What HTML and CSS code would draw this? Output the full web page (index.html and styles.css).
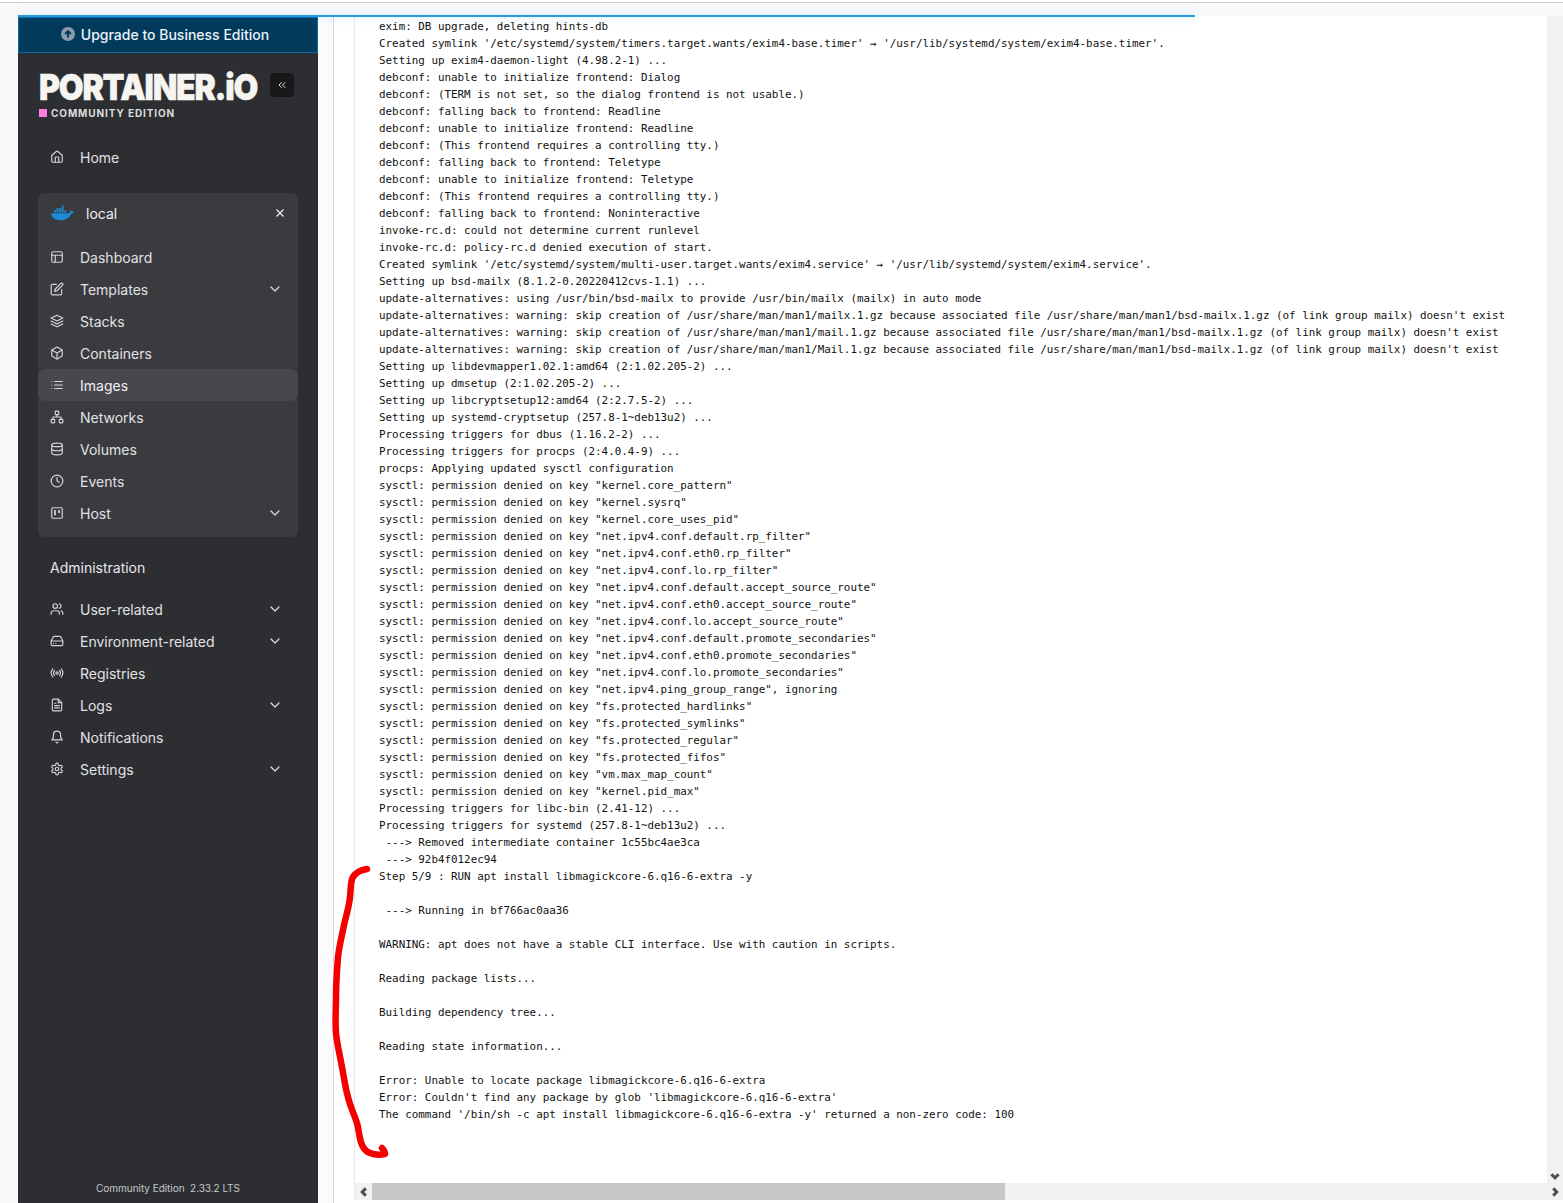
FILE: index.html
```
<!DOCTYPE html>
<html lang="en">
<head>
<meta charset="utf-8">
<title>Portainer</title>
<link rel="stylesheet" href="styles.css">
</head>
<body>
<svg class="defs" width="0" height="0" aria-hidden="true">
  <symbol id="i-home" viewBox="0 0 24 24"><path d="M15 21v-8a1 1 0 0 0-1-1h-4a1 1 0 0 0-1 1v8"/><path d="M3 10a2 2 0 0 1 .709-1.528l7-5.999a2 2 0 0 1 2.582 0l7 5.999A2 2 0 0 1 21 10v9a2 2 0 0 1-2 2H5a2 2 0 0 1-2-2z"/></symbol>
  <symbol id="i-layout" viewBox="0 0 24 24"><rect x="3" y="3" width="18" height="18" rx="2"/><path d="M3 9h18M9 21V9"/></symbol>
  <symbol id="i-edit" viewBox="0 0 24 24"><path d="M11 4H4a2 2 0 0 0-2 2v14a2 2 0 0 0 2 2h14a2 2 0 0 0 2-2v-7"/><path d="M18.5 2.5a2.121 2.121 0 0 1 3 3L12 15l-4 1 1-4 9.5-9.5z"/></symbol>
  <symbol id="i-layers" viewBox="0 0 24 24"><path d="M12 2 2 7l10 5 10-5-10-5z"/><path d="m2 17 10 5 10-5"/><path d="m2 12 10 5 10-5"/></symbol>
  <symbol id="i-box" viewBox="0 0 24 24"><path d="M21 16V8a2 2 0 0 0-1-1.73l-7-4a2 2 0 0 0-2 0l-7 4A2 2 0 0 0 3 8v8a2 2 0 0 0 1 1.73l7 4a2 2 0 0 0 2 0l7-4A2 2 0 0 0 21 16z"/><path d="M3.27 6.96 12 12.01l8.73-5.05M12 22.08V12"/></symbol>
  <symbol id="i-list" viewBox="0 0 24 24"><path d="M8 6h13M8 12h13M8 18h13M3 6h.01M3 12h.01M3 18h.01"/></symbol>
  <symbol id="i-network" viewBox="0 0 24 24"><rect x="16" y="16" width="6" height="6" rx="1"/><rect x="2" y="16" width="6" height="6" rx="1"/><rect x="9" y="2" width="6" height="6" rx="1"/><path d="M5 16v-3a1 1 0 0 1 1-1h12a1 1 0 0 1 1 1v3M12 12V8"/></symbol>
  <symbol id="i-db" viewBox="0 0 24 24"><ellipse cx="12" cy="5" rx="9" ry="3"/><path d="M21 12c0 1.66-4 3-9 3s-9-1.34-9-3"/><path d="M3 5v14c0 1.66 4 3 9 3s9-1.34 9-3V5"/></symbol>
  <symbol id="i-clock" viewBox="0 0 24 24"><circle cx="12" cy="12" r="10"/><path d="M12 6v6l4 2"/></symbol>
  <symbol id="i-trello" viewBox="0 0 24 24"><rect x="3" y="3" width="18" height="18" rx="2"/><rect x="7" y="7" width="3" height="9" class="solid"/><rect x="14" y="7" width="3" height="5" class="solid"/></symbol>
  <symbol id="i-users" viewBox="0 0 24 24"><path d="M16 21v-2a4 4 0 0 0-4-4H6a4 4 0 0 0-4 4v2"/><circle cx="9" cy="7" r="4"/><path d="M22 21v-2a4 4 0 0 0-3-3.87M16 3.13a4 4 0 0 1 0 7.75"/></symbol>
  <symbol id="i-drive" viewBox="0 0 24 24"><path d="M22 12H2"/><path d="M5.45 5.11 2 12v6a2 2 0 0 0 2 2h16a2 2 0 0 0 2-2v-6l-3.45-6.89A2 2 0 0 0 16.76 4H7.24a2 2 0 0 0-1.79 1.11z"/><path d="M6 16h.01M10 16h.01"/></symbol>
  <symbol id="i-radio" viewBox="0 0 24 24"><circle cx="12" cy="12" r="2"/><path d="M16.24 7.76a6 6 0 0 1 0 8.49m-8.48-.01a6 6 0 0 1 0-8.49m11.31-2.82a10 10 0 0 1 0 14.14m-14.14 0a10 10 0 0 1 0-14.14"/></symbol>
  <symbol id="i-file" viewBox="0 0 24 24"><path d="M14 2H6a2 2 0 0 0-2 2v16a2 2 0 0 0 2 2h12a2 2 0 0 0 2-2V8z"/><path d="M14 2v6h6M16 13H8M16 17H8M10 9H8"/></symbol>
  <symbol id="i-bell" viewBox="0 0 24 24"><path d="M18 8A6 6 0 0 0 6 8c0 7-3 9-3 9h18s-3-2-3-9"/><path d="M13.73 21a2 2 0 0 1-3.46 0"/></symbol>
  <symbol id="i-gear" viewBox="0 0 24 24"><path d="M12.22 2h-.44a2 2 0 0 0-2 2v.18a2 2 0 0 1-1 1.73l-.43.25a2 2 0 0 1-2 0l-.15-.08a2 2 0 0 0-2.73.73l-.22.38a2 2 0 0 0 .73 2.73l.15.1a2 2 0 0 1 1 1.72v.51a2 2 0 0 1-1 1.74l-.15.09a2 2 0 0 0-.73 2.73l.22.38a2 2 0 0 0 2.73.73l.15-.08a2 2 0 0 1 2 0l.43.25a2 2 0 0 1 1 1.73V20a2 2 0 0 0 2 2h.44a2 2 0 0 0 2-2v-.18a2 2 0 0 1 1-1.73l.43-.25a2 2 0 0 1 2 0l.15.08a2 2 0 0 0 2.73-.73l.22-.39a2 2 0 0 0-.73-2.73l-.15-.08a2 2 0 0 1-1-1.74v-.5a2 2 0 0 1 1-1.74l.15-.09a2 2 0 0 0 .73-2.73l-.22-.38a2 2 0 0 0-2.73-.73l-.15.08a2 2 0 0 1-2 0l-.43-.25a2 2 0 0 1-1-1.73V4a2 2 0 0 0-2-2z"/><circle cx="12" cy="12" r="3"/></symbol>
  <symbol id="i-chev" viewBox="0 0 24 24"><path d="m6 9 6 6 6-6"/></symbol>
</svg>

<div class="topline"></div>
<div class="shell">
  <aside class="sidebar">
    <a class="upgrade">
      <svg class="up-icon" viewBox="0 0 24 24"><circle cx="12" cy="12" r="12"/><path d="M12 18V7M7 12l5-5 5 5"/></svg>
      <span>Upgrade to Business Edition</span>
    </a>
    <div class="brand">
      <div class="brand-text">
        <div class="logo">PORTAINER.iO</div>
        <div class="edition"><span class="pink"></span>COMMUNITY EDITION</div>
      </div>
      <button class="collapse"><svg class="ico-sm" viewBox="0 0 24 24"><path d="m11 17-5-5 5-5M18 17l-5-5 5-5"/></svg></button>
    </div>
    <nav class="nav">
      <a class="item home"><svg class="ico"><use href="#i-home"/></svg><span>Home</span></a>
      <section class="env">
        <div class="env-head">
          <svg class="whale" viewBox="0 0 24 16">
            <path d="M0.3 8.2h17.4c.9 0 1.7-.3 2.2-.7-.3-.6-.4-1.6.1-2.4.8.3 1.4.9 1.6 1.6 1-.3 1.9-.1 2.4.3-.5 1.1-1.6 1.7-2.9 1.7C19.800 12.400 16 15.500 10 15.500 3.500 15.500.3 12.500.3 8.200z"/>
            <path d="M3 5.500h2.200v2.100H3zM5.700 5.500h2.200v2.100H5.700zM8.400 5.500h2.200v2.100H8.400zM11.100 5.500h2.200v2.100h-2.200zM13.800 5.500H16v2.100h-2.200zM5.700 3h2.200v2.100H5.700zM8.400 3h2.200v2.100H8.400zM11.100 3h2.200v2.100h-2.200zM11.100.5h2.200v2.100h-2.200z"/>
          </svg>
          <span class="env-name">local</span>
          <svg class="env-x" viewBox="0 0 24 24"><path d="M18 6 6 18M6 6l12 12"/></svg>
        </div>
        <a class="item"><svg class="ico"><use href="#i-layout"/></svg><span>Dashboard</span></a>
        <a class="item"><svg class="ico"><use href="#i-edit"/></svg><span>Templates</span><svg class="chev"><use href="#i-chev"/></svg></a>
        <a class="item"><svg class="ico"><use href="#i-layers"/></svg><span>Stacks</span></a>
        <a class="item"><svg class="ico"><use href="#i-box"/></svg><span>Containers</span></a>
        <a class="item active"><svg class="ico"><use href="#i-list"/></svg><span>Images</span></a>
        <a class="item"><svg class="ico"><use href="#i-network"/></svg><span>Networks</span></a>
        <a class="item"><svg class="ico"><use href="#i-db"/></svg><span>Volumes</span></a>
        <a class="item"><svg class="ico"><use href="#i-clock"/></svg><span>Events</span></a>
        <a class="item"><svg class="ico"><use href="#i-trello"/></svg><span>Host</span><svg class="chev"><use href="#i-chev"/></svg></a>
      </section>
      <div class="admin-title">Administration</div>
      <a class="item"><svg class="ico"><use href="#i-users"/></svg><span>User-related</span><svg class="chev"><use href="#i-chev"/></svg></a>
      <a class="item"><svg class="ico"><use href="#i-drive"/></svg><span>Environment-related</span><svg class="chev"><use href="#i-chev"/></svg></a>
      <a class="item"><svg class="ico"><use href="#i-radio"/></svg><span>Registries</span></a>
      <a class="item"><svg class="ico"><use href="#i-file"/></svg><span>Logs</span><svg class="chev"><use href="#i-chev"/></svg></a>
      <a class="item"><svg class="ico"><use href="#i-bell"/></svg><span>Notifications</span></a>
      <a class="item"><svg class="ico"><use href="#i-gear"/></svg><span>Settings</span><svg class="chev"><use href="#i-chev"/></svg></a>
    </nav>
    <footer class="side-foot">Community Edition&nbsp; 2.33.2 LTS</footer>
  </aside>

  <main class="main">
    <div class="gutter"></div>
    <div class="panel">
      <div class="logbox">
        <div class="log-row">
<pre class="log">exim: DB upgrade, deleting hints-db
Created symlink '/etc/systemd/system/timers.target.wants/exim4-base.timer' → '/usr/lib/systemd/system/exim4-base.timer'.
Setting up exim4-daemon-light (4.98.2-1) ...
debconf: unable to initialize frontend: Dialog
debconf: (TERM is not set, so the dialog frontend is not usable.)
debconf: falling back to frontend: Readline
debconf: unable to initialize frontend: Readline
debconf: (This frontend requires a controlling tty.)
debconf: falling back to frontend: Teletype
debconf: unable to initialize frontend: Teletype
debconf: (This frontend requires a controlling tty.)
debconf: falling back to frontend: Noninteractive
invoke-rc.d: could not determine current runlevel
invoke-rc.d: policy-rc.d denied execution of start.
Created symlink '/etc/systemd/system/multi-user.target.wants/exim4.service' → '/usr/lib/systemd/system/exim4.service'.
Setting up bsd-mailx (8.1.2-0.20220412cvs-1.1) ...
update-alternatives: using /usr/bin/bsd-mailx to provide /usr/bin/mailx (mailx) in auto mode
update-alternatives: warning: skip creation of /usr/share/man/man1/mailx.1.gz because associated file /usr/share/man/man1/bsd-mailx.1.gz (of link group mailx) doesn't exist
update-alternatives: warning: skip creation of /usr/share/man/man1/mail.1.gz because associated file /usr/share/man/man1/bsd-mailx.1.gz (of link group mailx) doesn't exist
update-alternatives: warning: skip creation of /usr/share/man/man1/Mail.1.gz because associated file /usr/share/man/man1/bsd-mailx.1.gz (of link group mailx) doesn't exist
Setting up libdevmapper1.02.1:amd64 (2:1.02.205-2) ...
Setting up dmsetup (2:1.02.205-2) ...
Setting up libcryptsetup12:amd64 (2:2.7.5-2) ...
Setting up systemd-cryptsetup (257.8-1~deb13u2) ...
Processing triggers for dbus (1.16.2-2) ...
Processing triggers for procps (2:4.0.4-9) ...
procps: Applying updated sysctl configuration
sysctl: permission denied on key "kernel.core_pattern"
sysctl: permission denied on key "kernel.sysrq"
sysctl: permission denied on key "kernel.core_uses_pid"
sysctl: permission denied on key "net.ipv4.conf.default.rp_filter"
sysctl: permission denied on key "net.ipv4.conf.eth0.rp_filter"
sysctl: permission denied on key "net.ipv4.conf.lo.rp_filter"
sysctl: permission denied on key "net.ipv4.conf.default.accept_source_route"
sysctl: permission denied on key "net.ipv4.conf.eth0.accept_source_route"
sysctl: permission denied on key "net.ipv4.conf.lo.accept_source_route"
sysctl: permission denied on key "net.ipv4.conf.default.promote_secondaries"
sysctl: permission denied on key "net.ipv4.conf.eth0.promote_secondaries"
sysctl: permission denied on key "net.ipv4.conf.lo.promote_secondaries"
sysctl: permission denied on key "net.ipv4.ping_group_range", ignoring
sysctl: permission denied on key "fs.protected_hardlinks"
sysctl: permission denied on key "fs.protected_symlinks"
sysctl: permission denied on key "fs.protected_regular"
sysctl: permission denied on key "fs.protected_fifos"
sysctl: permission denied on key "vm.max_map_count"
sysctl: permission denied on key "kernel.pid_max"
Processing triggers for libc-bin (2.41-12) ...
Processing triggers for systemd (257.8-1~deb13u2) ...
 ---&gt; Removed intermediate container 1c55bc4ae3ca
 ---&gt; 92b4f012ec94
Step 5/9 : RUN apt install libmagickcore-6.q16-6-extra -y

 ---&gt; Running in bf766ac0aa36

WARNING: apt does not have a stable CLI interface. Use with caution in scripts.

Reading package lists...

Building dependency tree...

Reading state information...

Error: Unable to locate package libmagickcore-6.q16-6-extra
Error: Couldn't find any package by glob 'libmagickcore-6.q16-6-extra'
The command '/bin/sh -c apt install libmagickcore-6.q16-6-extra -y' returned a non-zero code: 100
</pre>
          <div class="vscroll"><svg class="arrow" viewBox="0 0 10 10"><path d="m2 3.500 3 3 3-3"/></svg></div>
        </div>
        <div class="hscroll">
          <div class="harrow"><svg class="arrow" viewBox="0 0 10 10"><path d="M6.500 2l-3 3 3 3"/></svg></div>
          <div class="htrack"><div class="hthumb"></div></div>
          <div class="harrow"><svg class="arrow" viewBox="0 0 10 10"><path d="m3.500 2 3 3-3 3"/></svg></div>
        </div>
      </div>
    </div>
  </main>
</div>
<div class="loadbar"></div>
<svg class="scribble" viewBox="0 0 1563 1203"><path d="M367 869C361 870 356 872 353 877C350 882 351 890 350 897C349 908 345 919 343 930C341 939 339 948 338 957C337 970 336 984 336 997C336 1009 335 1021 336 1033C337 1044 340 1056 342 1067C344 1077 345 1087 348 1097C350 1106 354 1114 357 1123C359 1130 359 1138 362 1145C364 1149 366 1152 370 1153C375 1155 380 1155 385 1154C385 1151 384 1150 382 1148"/></svg>
</body>
</html>
```
FILE: styles.css
```
* { box-sizing: border-box; }
html, body { margin: 0; height: 1203px; overflow: hidden; }
body {
  background: #f9f9fb;
  font-family: Inter, "Liberation Sans", sans-serif;
  display: flex;
  flex-direction: column;
}
.defs { position: absolute; }
.topline { height: 3px; background: #fff; border-bottom: 1px solid #cfcfd4; flex: none; }
.shell { flex: 1; min-height: 0; display: flex; padding: 13px 0 0 18px; }

/* sidebar */
.sidebar {
  width: 300px; flex: none;
  background: #2d2e32;
  color: #e4e4e7;
  display: flex; flex-direction: column;
}
.upgrade {
  margin-top: 1px;
  height: 36px; flex: none;
  background: #023a5c;
  border: 1px solid #0b6ea8;
  display: flex; align-items: center; justify-content: center; gap: 6px;
  padding: 0 6px 2px 0;
  color: #eaf3f9; font-size: 14px; font-weight: 500;
}
.up-icon { width: 14px; height: 14px; }
.up-icon circle { fill: #8b9bac; }
.up-icon path { fill: none; stroke: #023a5c; stroke-width: 3.500; }
.brand { display: flex; align-items: flex-start; padding: 17px 24px 0 21px; justify-content: space-between; height: 88px; flex: none; }
.logo {
  font-family: Inter, "Liberation Sans", sans-serif;
  font-size: 36px; font-weight: 900; line-height: 34px; color: #f6f5f1;
  letter-spacing: -1.400px; white-space: nowrap; width: 222px;
  -webkit-text-stroke: .5px #f6f5f1;
  transform: scaleX(.89); transform-origin: left center;
}
.edition { display: flex; align-items: center; gap: 4px; font-size: 10px; font-weight: 700; letter-spacing: .9px; color: #dcdcdc; line-height: 14px; margin-top: 2px; }
.pink { width: 8px; height: 8px; background: #ff7ee6; display: block; }
.collapse { width: 24px; height: 24px; border: 0; padding: 0; border-radius: 4px; background: #18181a; display: flex; align-items: center; justify-content: center; margin-top: 3px; }
.ico-sm { width: 12px; height: 12px; fill: none; stroke: #ddd; stroke-width: 2; stroke-linecap: round; stroke-linejoin: round; }

.nav { padding: 0 20px; display: flex; flex-direction: column; }
.item {
  height: 32px; display: flex; align-items: center;
  padding: 0 12px; border-radius: 8px;
  font-size: 14px; color: #e1e1e4; flex: none;
}
.home { margin-bottom: 20px; }
.ico { width: 14px; height: 14px; margin-right: 16px; flex: none; fill: none; stroke: #d4d4d8; stroke-width: 2; stroke-linecap: round; stroke-linejoin: round; }
.solid { fill: #d4d4d8; stroke: none; }
.chev { width: 16px; height: 16px; margin-left: auto; margin-right: 3px; fill: none; stroke: #d4d4d8; stroke-width: 2; stroke-linecap: round; stroke-linejoin: round; }
.env { background: #3a3b3f; border-radius: 6px; padding-bottom: 8px; }
.env-head { height: 40px; display: flex; align-items: center; padding: 0 11px 0 13px; margin-bottom: 8px; }
.whale { width: 23px; height: 16px; fill: #1d8bd8; }
.env-name { margin-left: 12px; font-size: 14px; color: #f0f0f2; }
.env-x { width: 14px; height: 14px; margin-left: auto; fill: none; stroke: #f0f0f2; stroke-width: 2; }
.active { background: #47484c; color: #f0f0f2; }
.admin-title { font-size: 14px; color: #e8e8ea; padding-left: 12px; line-height: 17px; margin: 22px 0 17px; }
.side-foot { margin-top: auto; padding-bottom: 9px; text-align: center; font-size: 10px; letter-spacing: -.04px; color: #c6c6cb; line-height: 12px; }

/* main */
.main { flex: 1; min-width: 0; display: flex; }
.gutter { width: 15px; flex: none; background: #fbfbfd; }
.panel { flex: 1; min-width: 0; background: #fff; border-left: 1px solid #d6d6e0; padding-left: 20px; padding-bottom: 3px; display: flex; flex-direction: column; }
.logbox { flex: 1; min-height: 0; background: #fff; border-left: 1px solid #e8e8ec; display: flex; flex-direction: column; }
.log-row { flex: 1; min-height: 0; display: flex; }
.log {
  flex: 1; min-width: 0; margin: 0; padding: 2px 0 0 24px; overflow: hidden;
  font-family: "DejaVu Sans Mono", "Liberation Mono", monospace;
  font-size: 10.880px; line-height: 17px; color: #111;
}
.vscroll { width: 16px; flex: none; background: #f1f1f1; display: flex; flex-direction: column; justify-content: flex-end; align-items: center; padding-bottom: 1px; }
.hscroll { height: 17px; flex: none; background: #f1f1f1; display: flex; align-items: center; }
.harrow { width: 17px; height: 17px; display: flex; align-items: center; justify-content: center; flex: none; }
.htrack { flex: 1; height: 17px; }
.hthumb { width: 633px; height: 17px; background: #c7c7c7; }
.arrow { width: 12px; height: 12px; fill: none; stroke: #505050; stroke-width: 2.500; }

/* overlays */
.loadbar { position: absolute; left: 18px; top: 15px; width: 1177px; height: 2px; background: #2a9ae0; box-shadow: 0 0 8px rgba(42,154,224,.35); }
.scribble { position: absolute; inset: 0; width: 1563px; height: 1203px; pointer-events: none; }
.scribble path { fill: none; stroke: #f40000; stroke-width: 6.500; stroke-linecap: round; stroke-linejoin: round; }
```
